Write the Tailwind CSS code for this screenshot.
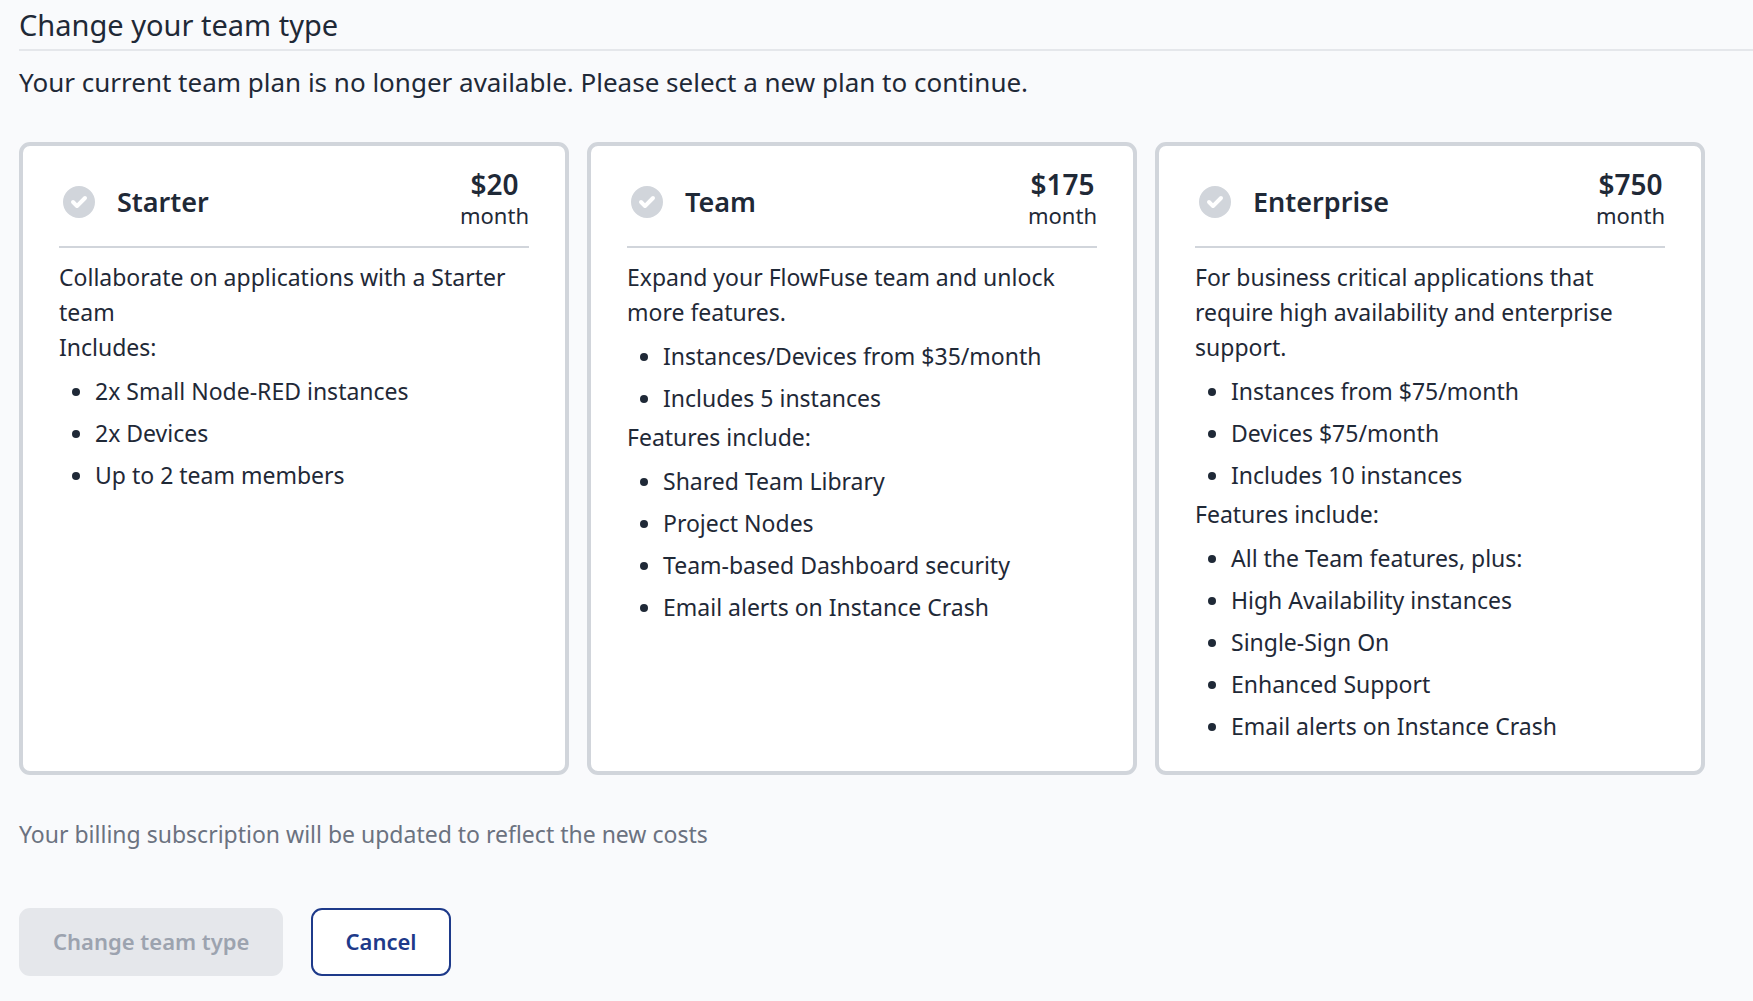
<!DOCTYPE html>
<html lang="en">
<head>
<meta charset="utf-8">
<meta name="viewport" content="width=device-width, initial-scale=1">
<title>Change your team type</title>
<script src="https://cdn.jsdelivr.net/npm/@tailwindcss/browser@4"></script>
</head>
<body class="min-h-screen bg-[#f9fafc] pl-[19px] font-['Noto_Sans',sans-serif] text-[23px] leading-[35px] text-[#1f2937]">
  <svg class="hidden" aria-hidden="true">
    <symbol id="check-circle" viewBox="0 0 20 20">
      <path fill="currentColor" fill-rule="evenodd" d="M10 18a8 8 0 100-16 8 8 0 000 16zm3.707-9.293a1 1 0 00-1.414-1.414L9 10.586 7.707 9.293a1 1 0 00-1.414 1.414l2 2a1 1 0 001.414 0l4-4z" clip-rule="evenodd"/>
    </symbol>
  </svg>

  <main>
    <h1 class="border-b-2 border-[#e5e7eb] pt-1 pb-1 text-[29px] leading-[41px]">Change your team type</h1>
    <p class="pt-[11px] text-[26px] leading-10">Your current team plan is no longer available. Please select a new plan to continue.</p>

    <form>
      <div class="mt-10 mr-12 grid grid-cols-3 gap-[18px]">
        <section class="rounded-[11px] border-4 border-[#d1d5db] bg-white px-9 pt-[22px] pb-[23px]">
          <div class="flex items-center justify-between border-b-2 border-[#d1d5db] pb-3">
            <label class="flex items-center gap-[18px] text-[27px] font-semibold">
              <input type="radio" name="plan" class="sr-only">
              <svg class="mt-0.5 size-10 text-[#d1d5db]"><use href="#check-circle"/></svg>
              Starter
            </label>
            <div class="pb-1 text-center">
              <div class="text-[28px] leading-8 font-semibold">$20</div>
              <div class="text-[22px] leading-[30px]">month</div>
            </div>
          </div>
          <p class="pt-3">Collaborate on applications with a Starter team</p>
          <p>Includes:</p>
          <ul class="mt-[9px] mb-1 list-disc space-y-[7px] pl-9">
            <li>2x Small Node-RED instances</li>
            <li>2x Devices</li>
            <li>Up to 2 team members</li>
          </ul>
        </section>

        <section class="rounded-[11px] border-4 border-[#d1d5db] bg-white px-9 pt-[22px] pb-[23px]">
          <div class="flex items-center justify-between border-b-2 border-[#d1d5db] pb-3">
            <label class="flex items-center gap-[18px] text-[27px] font-semibold">
              <input type="radio" name="plan" class="sr-only">
              <svg class="mt-0.5 size-10 text-[#d1d5db]"><use href="#check-circle"/></svg>
              Team
            </label>
            <div class="pb-1 text-center">
              <div class="text-[28px] leading-8 font-semibold">$175</div>
              <div class="text-[22px] leading-[30px]">month</div>
            </div>
          </div>
          <p class="pt-3">Expand your FlowFuse team and unlock more features.</p>
          <ul class="mt-[9px] mb-1 list-disc space-y-[7px] pl-9">
            <li>Instances/Devices from $35/month</li>
            <li>Includes 5 instances</li>
          </ul>
          <p>Features include:</p>
          <ul class="mt-[9px] mb-1 list-disc space-y-[7px] pl-9">
            <li>Shared Team Library</li>
            <li>Project Nodes</li>
            <li>Team-based Dashboard security</li>
            <li>Email alerts on Instance Crash</li>
          </ul>
        </section>

        <section class="rounded-[11px] border-4 border-[#d1d5db] bg-white px-9 pt-[22px] pb-[23px]">
          <div class="flex items-center justify-between border-b-2 border-[#d1d5db] pb-3">
            <label class="flex items-center gap-[18px] text-[27px] font-semibold">
              <input type="radio" name="plan" class="sr-only">
              <svg class="mt-0.5 size-10 text-[#d1d5db]"><use href="#check-circle"/></svg>
              Enterprise
            </label>
            <div class="pb-1 text-center">
              <div class="text-[28px] leading-8 font-semibold">$750</div>
              <div class="text-[22px] leading-[30px]">month</div>
            </div>
          </div>
          <p class="pt-3">For business critical applications that require high availability and enterprise support.</p>
          <ul class="mt-[9px] mb-1 list-disc space-y-[7px] pl-9">
            <li>Instances from $75/month</li>
            <li>Devices $75/month</li>
            <li>Includes 10 instances</li>
          </ul>
          <p>Features include:</p>
          <ul class="mt-[9px] mb-1 list-disc space-y-[7px] pl-9">
            <li>All the Team features, plus:</li>
            <li>High Availability instances</li>
            <li>Single-Sign On</li>
            <li>Enhanced Support</li>
            <li>Email alerts on Instance Crash</li>
          </ul>
        </section>
      </div>

      <p class="mt-[42px] text-[#6b7280]">Your billing subscription will be updated to reflect the new costs</p>

      <div class="mt-14 flex gap-7 text-[22px] font-semibold">
        <button type="button" disabled class="h-[68px] rounded-[11px] border-2 border-[#e5e7eb] bg-[#e5e7eb] px-8 pb-0.5 text-[#9ca3af]">Change team type</button>
        <button type="button" class="h-[68px] rounded-[11px] border-2 border-[#1e3a8a] bg-white px-8 pb-0.5 text-[#1e3a8a]">Cancel</button>
      </div>
    </form>
  </main>
</body>
</html>
